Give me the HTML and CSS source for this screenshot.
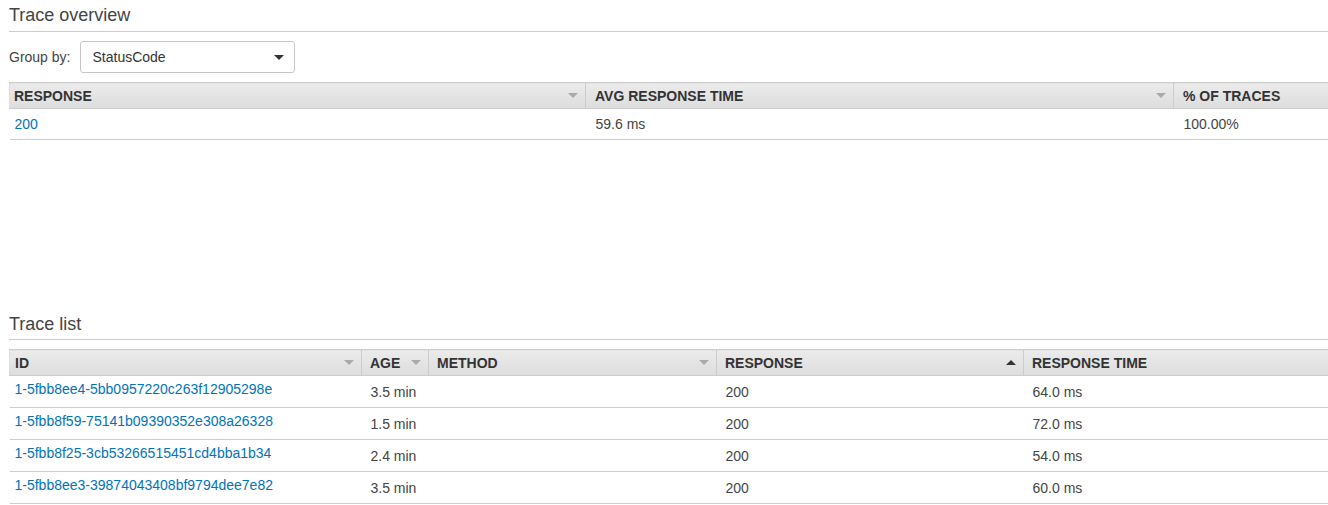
FILE: index.html
```html
<!DOCTYPE html>
<html>
<head>
<meta charset="utf-8">
<link rel="stylesheet" href="styles.css">
</head>
<body>
<div class="page">
  <section class="section">
    <h2 class="section-title">Trace overview</h2>
    <div class="toolbar">
      <span class="toolbar-label">Group by:</span>
      <div class="select">
        <span class="select-value">StatusCode</span>
        <span class="select-caret"></span>
      </div>
    </div>
    <table class="grid">
      <colgroup>
        <col class="w-ov-resp">
        <col class="w-ov-avg">
        <col>
      </colgroup>
      <thead>
        <tr>
          <th class="first"><div class="th-inner"><span>RESPONSE</span><span class="sort"></span></div></th>
          <th><div class="th-inner"><span>AVG RESPONSE TIME</span><span class="sort"></span></div></th>
          <th class="last"><div class="th-inner"><span>% OF TRACES</span></div></th>
        </tr>
      </thead>
      <tbody>
        <tr class="row-ov">
          <td class="first"><a class="link" href="#">200</a></td>
          <td>59.6 ms</td>
          <td>100.00%</td>
        </tr>
      </tbody>
    </table>
  </section>

  <section class="section section-list">
    <h2 class="section-title">Trace list</h2>
    <table class="grid grid-list">
      <colgroup>
        <col class="w-id">
        <col class="w-age">
        <col class="w-method">
        <col class="w-resp">
        <col>
      </colgroup>
      <thead>
        <tr>
          <th class="first id-h"><div class="th-inner"><span>ID</span><span class="sort"></span></div></th>
          <th><div class="th-inner"><span>AGE</span><span class="sort"></span></div></th>
          <th><div class="th-inner"><span>METHOD</span><span class="sort"></span></div></th>
          <th><div class="th-inner"><span>RESPONSE</span><span class="sort sort-up"></span></div></th>
          <th class="last"><div class="th-inner"><span>RESPONSE TIME</span></div></th>
        </tr>
      </thead>
      <tbody>
        <tr>
          <td class="first id-cell"><a class="link" href="#">1-5fbb8ee4-5bb0957220c263f12905298e</a></td>
          <td>3.5 min</td>
          <td></td>
          <td>200</td>
          <td>64.0 ms</td>
        </tr>
        <tr>
          <td class="first id-cell"><a class="link" href="#">1-5fbb8f59-75141b09390352e308a26328</a></td>
          <td>1.5 min</td>
          <td></td>
          <td>200</td>
          <td>72.0 ms</td>
        </tr>
        <tr>
          <td class="first id-cell"><a class="link" href="#">1-5fbb8f25-3cb53266515451cd4bba1b34</a></td>
          <td>2.4 min</td>
          <td></td>
          <td>200</td>
          <td>54.0 ms</td>
        </tr>
        <tr>
          <td class="first id-cell"><a class="link" href="#">1-5fbb8ee3-39874043408bf9794dee7e82</a></td>
          <td>3.5 min</td>
          <td></td>
          <td>200</td>
          <td>60.0 ms</td>
        </tr>
      </tbody>
    </table>
  </section>
</div>
</body>
</html>
```

FILE: styles.css
```css
html, body {
  margin: 0;
  padding: 0;
  background: #ffffff;
}

body {
  font-family: "Liberation Sans", Arial, sans-serif;
  font-size: 14px;
  color: #444444;
  overflow: hidden;
}

.page {
  padding: 4px 0 0 9px;
}

.section-title {
  margin: 0;
  font-size: 18px;
  line-height: 22px;
  font-weight: normal;
  color: #444444;
  padding-bottom: 5px;
  border-bottom: 1px solid #cccccc;
}

.toolbar {
  display: flex;
  align-items: center;
  gap: 10px;
  margin-top: 9px;
  margin-bottom: 9px;
}

.toolbar-label {
  color: #444444;
}

.select {
  box-sizing: border-box;
  width: 215px;
  height: 32px;
  border: 1px solid #c6c6c6;
  border-radius: 3px;
  display: flex;
  align-items: center;
  justify-content: space-between;
  padding: 0 10px 0 11px;
  color: #333333;
  background: #ffffff;
}

.select-caret {
  width: 0;
  height: 0;
  border-left: 5px solid transparent;
  border-right: 5px solid transparent;
  border-top: 5px solid #333333;
}

.grid {
  width: 1330px;
  border-collapse: collapse;
  table-layout: fixed;
}

.w-ov-resp { width: 576px; }
.w-ov-avg { width: 588px; }

.w-id { width: 352px; }
.w-age { width: 67px; }
.w-method { width: 288px; }
.w-resp { width: 307px; }

.grid th {
  height: 25px;
  padding: 0 0 0 9px;
  text-align: left;
  font-weight: bold;
  color: #333333;
  background: linear-gradient(#ebebeb, #dddddd);
  border-top: 1px solid #cccccc;
  border-bottom: 1px solid #cccccc;
  border-left: 1px solid #cccccc;
}

.grid-list th {
  padding-left: 8px;
}

.grid th.first {
  padding-left: 4px;
  border-left: 1px solid #dddddd;
}

.grid th.id-h {
  padding-left: 5px;
}

.th-inner {
  display: flex;
  align-items: center;
  justify-content: space-between;
  padding-right: 7px;
}

.sort {
  width: 0;
  height: 0;
  border-left: 5px solid transparent;
  border-right: 5px solid transparent;
  border-top: 5px solid #aaaaaa;
}

.sort-up {
  border-top: none;
  border-bottom: 5px solid #333333;
}

.grid td {
  height: 31px;
  padding: 0 0 0 10px;
  border-bottom: 1px solid #cccccc;
  vertical-align: middle;
  color: #444444;
  white-space: nowrap;
}

.grid-list td {
  height: 31px;
  padding-left: 9px;
}

.grid td.first {
  padding-left: 5px;
}

.grid-list td.first {
  padding-left: 5px;
}

.grid-list td.id-cell {
  height: 25px;
  padding-bottom: 6px;
}

.row-ov td {
  height: 30px;
}

.link {
  color: #0073bb;
  text-decoration: none;
}

.section-list {
  margin-top: 173px;
}

.section-list .section-title {
  padding-bottom: 4px;
  margin-bottom: 9px;
}
```
